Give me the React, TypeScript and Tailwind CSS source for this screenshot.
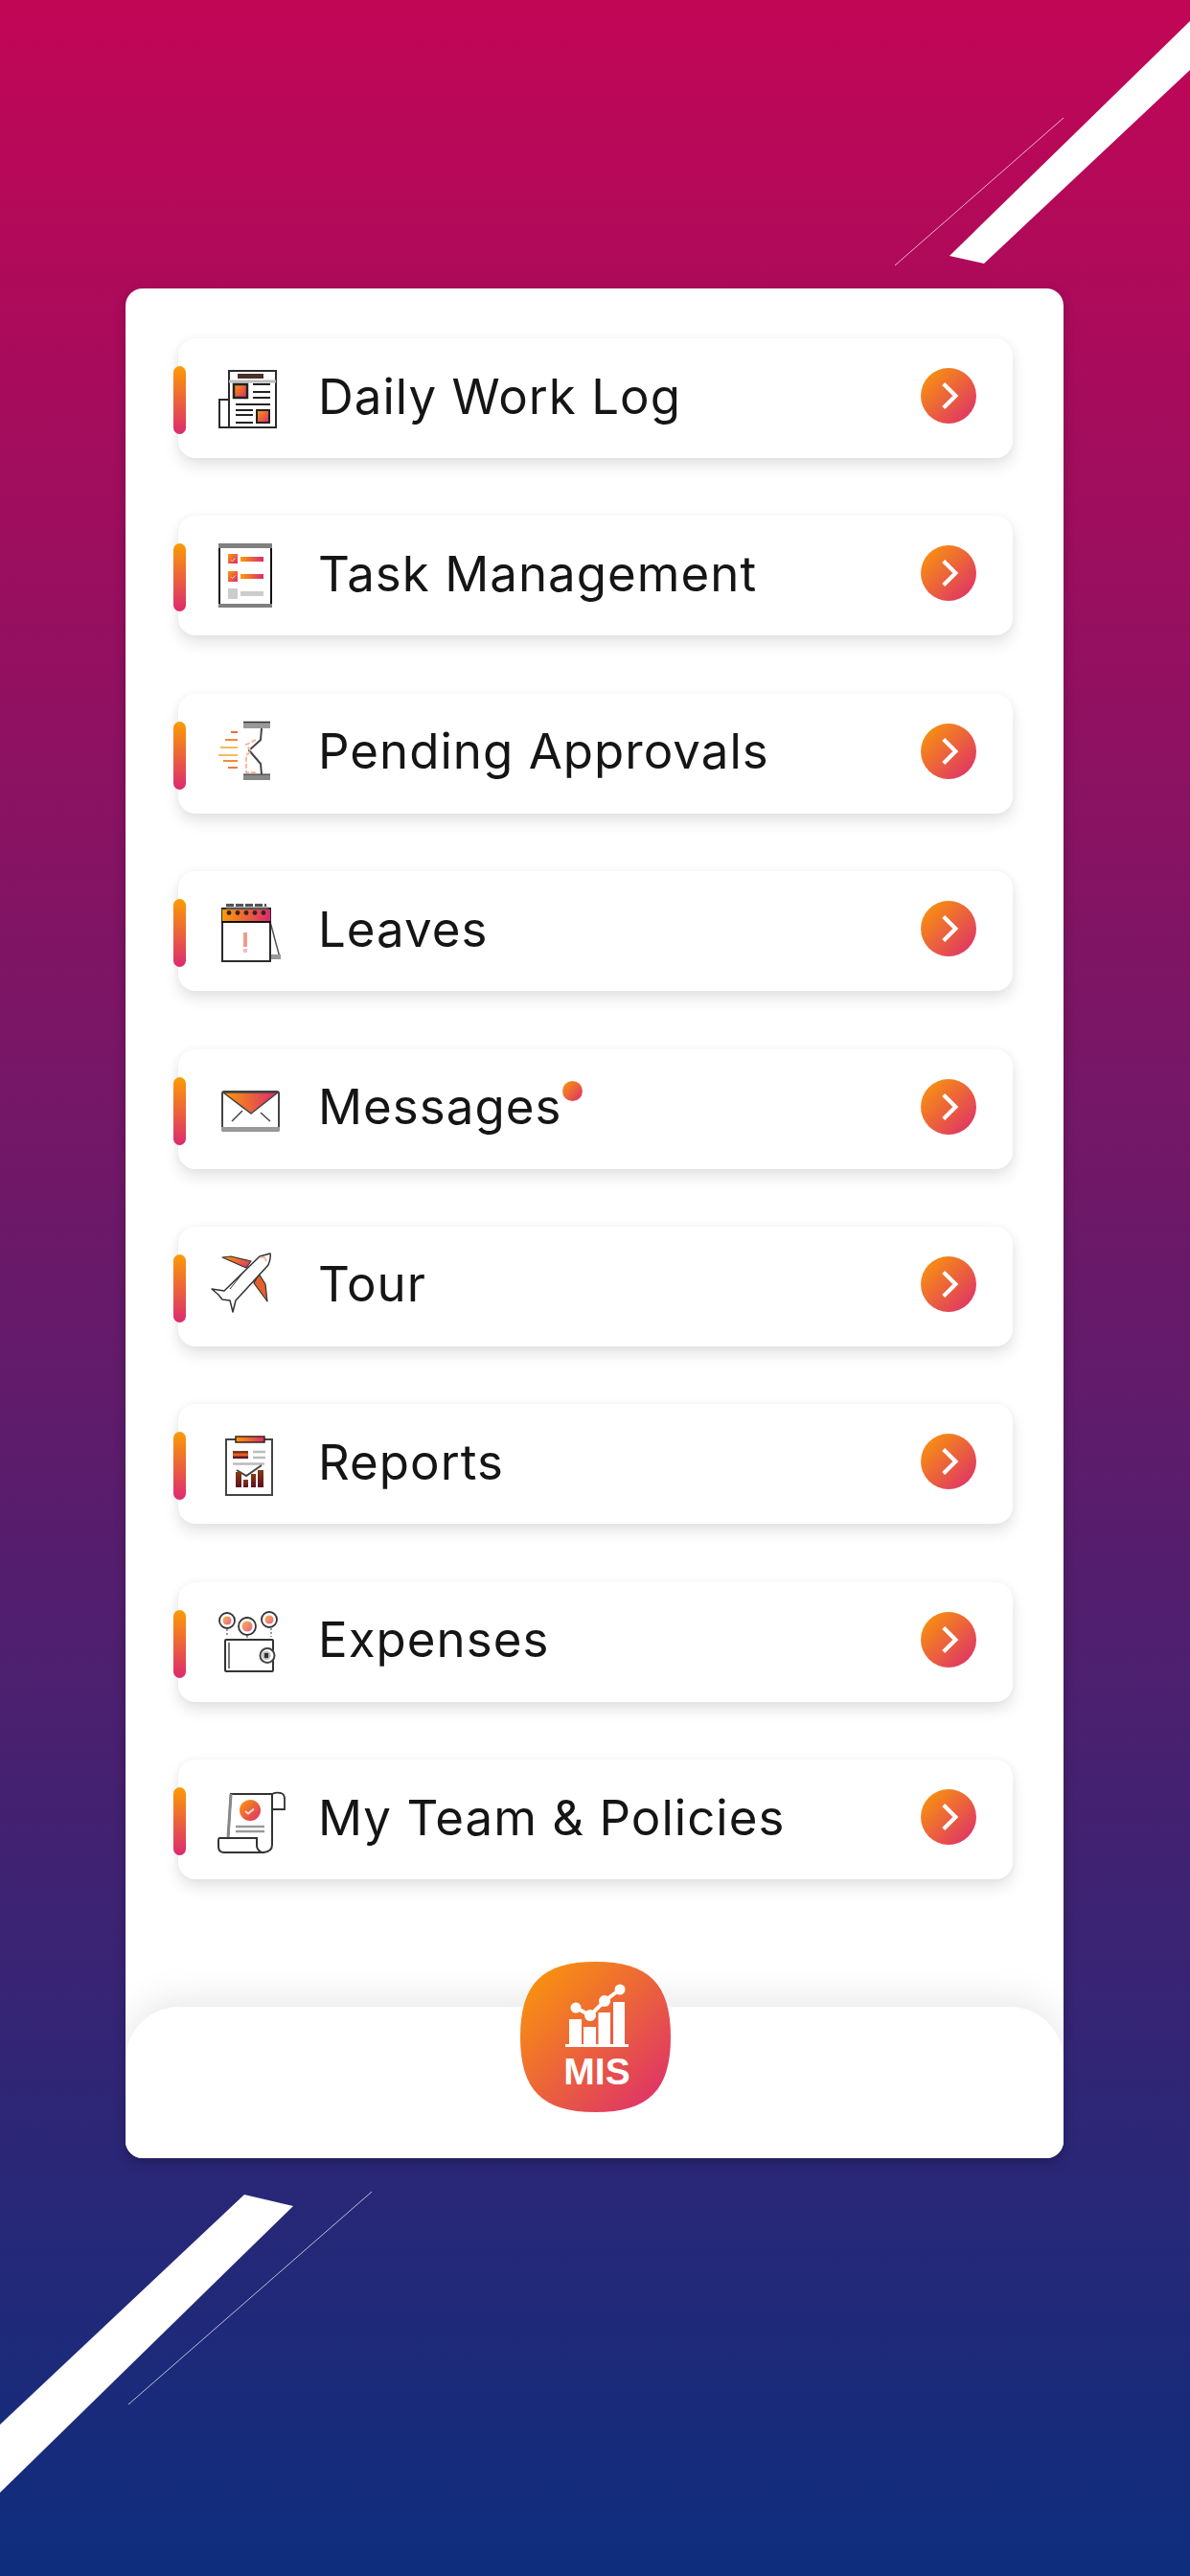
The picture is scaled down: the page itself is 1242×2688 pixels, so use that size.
import React from 'react';

const ink = '#2b2b2b';

// shared gradient used by every icon
const GradientDefs = () => (
  <svg className="absolute w-0 h-0">
    <defs>
      <linearGradient id="warm" x1="0" y1="0" x2="1" y2="1">
        <stop offset="0" stopColor="#fb9c05" />
        <stop offset="1" stopColor="#dc2a70" />
      </linearGradient>
      <linearGradient id="warmX" x1="0" y1="0" x2="1" y2="0">
        <stop offset="0" stopColor="#fb9c05" />
        <stop offset="1" stopColor="#dc2a70" />
      </linearGradient>
      <linearGradient id="warmDark" x1="0" y1="0" x2="0" y2="1">
        <stop offset="0" stopColor="#8a3a10" />
        <stop offset="1" stopColor="#5a1024" />
      </linearGradient>
    </defs>
  </svg>
);

const IconBox = ({ children }: { children: React.ReactNode }) => (
  <svg viewBox="0 0 80 80" className="w-[80px] h-[80px] shrink-0 overflow-visible" fill="none">
    {children}
  </svg>
);

const NewsIcon = () => (
  <IconBox>
    <rect x="23" y="11" width="49" height="59" stroke={ink} strokeWidth="2" fill="#fff" />
    <path d="M23 41H13V70H23" stroke={ink} strokeWidth="2" />
    <path d="M23 22H72" stroke="#bbb" strokeWidth="3" />
    <rect x="32" y="14" width="27" height="5" fill="#4a3028" />
    <rect x="28" y="25" width="14" height="14" fill="url(#warm)" stroke="#222" strokeWidth="2.5" />
    <path d="M48 25H66M48 33H66M48 39H66M30 46H66M30 52H48M30 57H48M30 65H48" stroke="#222" strokeWidth="2" />
    <rect x="52" y="52" width="13" height="13" fill="url(#warm)" stroke="#222" strokeWidth="2" />
  </IconBox>
);

const TaskIcon = () => (
  <IconBox>
    <rect x="13" y="7" width="54" height="65" stroke="#111" strokeWidth="2" fill="#fff" />
    <rect x="12" y="6" width="56" height="5" fill="#808080" />
    <rect x="12" y="69" width="56" height="4" fill="#808080" />
    <rect x="22" y="17" width="10" height="10" fill="url(#warm)" />
    <rect x="22" y="35" width="10" height="11" fill="url(#warm)" />
    <rect x="22" y="53" width="10" height="11" fill="#ccc" />
    <path d="M25 23l1.500 1.500 3-3M25 41l1.500 1.500 3-3" stroke="#fff" strokeWidth="1" opacity="0.7" />
    <rect x="35" y="20" width="24" height="5" fill="url(#warmX)" />
    <rect x="35" y="38" width="24" height="5" fill="url(#warmX)" />
    <rect x="35" y="56" width="24" height="5" fill="#ccc" />
  </IconBox>
);

const HourglassIcon = () => (
  <IconBox>
    <rect x="38" y="7" width="28" height="7" fill="#999" />
    <path d="M38 7.500H66" stroke="#333" strokeWidth="1.500" />
    <rect x="38" y="62" width="28" height="6" fill="#888" />
    <path d="M38 62H66" stroke="#333" strokeWidth="1" />
    <path d="M57 14L56 26L44 37L56 51L57 62" stroke="#444" strokeWidth="2" />
    <path d="M51 26L41 31L46 38L41 42V60H53" stroke="#f7b9a0" strokeWidth="2" strokeDasharray="5 2" />
    <path d="M25 18H32" stroke="#ee6a3a" strokeWidth="2" />
    <path d="M19 26H32" stroke="#f28b3a" strokeWidth="2" />
    <path d="M14 34H32" stroke="#f8a02a" strokeWidth="1.500" />
    <path d="M12 42H32" stroke="#f8a02a" strokeWidth="1.500" />
    <path d="M17 48H32" stroke="#f28b3a" strokeWidth="2" />
    <path d="M22 55H32" stroke="#ee7a3a" strokeWidth="2" />
  </IconBox>
);

const CalendarIcon = () => (
  <IconBox>
    <path d="M66 30L76 67" stroke="#555" strokeWidth="1.500" />
    <path d="M66 64H77V69H66Z" fill="#999" />
    <rect x="16" y="16" width="50" height="55" stroke="#2b2b2b" strokeWidth="2" fill="#fff" />
    <rect x="16" y="17" width="50" height="12" fill="url(#warmX)" />
    <path d="M15 30H67" stroke="#111" strokeWidth="2" />
    <path d="M20 12.500H62" stroke="#555" strokeWidth="3" strokeDasharray="8 2" />
    <path d="M20 15.500H64" stroke="#666" strokeWidth="2" />
    {[23, 32, 41, 50, 59].map((cx) => (
      <circle key={cx} cx={cx} cy="20.500" r="2.400" fill="#3a2418" />
    ))}
    <rect x="38" y="41" width="4" height="15" fill="#f59a8a" />
    <rect x="38" y="58" width="4" height="4" fill="#f7b9c0" />
  </IconBox>
);

const MailIcon = () => (
  <IconBox>
    <rect x="16" y="22" width="59" height="41" rx="2" stroke="#444" strokeWidth="2" fill="#fff" />
    <path d="M15 59H76V62Q76 64 74 64H17Q15 64 15 62Z" fill="#999" />
    <path d="M17 23H74L46 45Z" fill="url(#warmX)" stroke="#444" strokeWidth="1.500" strokeLinejoin="round" />
    <path d="M26 53L37 42M66 53L56 44" stroke="#444" strokeWidth="1.500" />
  </IconBox>
);

const PlaneIcon = () => (
  <IconBox>
    <path d="M16 10L25 9L46 14L41 21Z" fill="url(#warm)" stroke="#333" strokeWidth="1.200" strokeLinejoin="round" />
    <path d="M54 27L61 38L63 56L49 37Z" fill="#e4602c" stroke="#333" strokeWidth="1.200" strokeLinejoin="round" />
    <path
      d="M66 6L55 9L18 45L5 43L12 49L16 54L24 55L27 67L30 55L64 18Q67 11 66 6Z"
      fill="#fff"
      stroke="#333"
      strokeWidth="1.500"
      strokeLinejoin="round"
    />
    <path d="M56 10L60 10L62 14" stroke="#f7b9a0" strokeWidth="2" />
    <path d="M36 28L24 43" stroke="#333" strokeWidth="1" />
  </IconBox>
);

const ReportIcon = () => (
  <IconBox>
    <rect x="20" y="14" width="48" height="58" stroke="#444" strokeWidth="2" fill="#fff" />
    <rect x="30" y="11" width="30" height="6" fill="url(#warmX)" stroke="#3a2418" strokeWidth="1.500" />
    <rect x="27" y="26" width="16" height="8" fill="url(#warmDark)" />
    <rect x="27" y="28.500" width="16" height="3" fill="#e4602c" />
    <path d="M48 27H61M48 33H61M27 39.500H60" stroke="#bbb" strokeWidth="2.500" />
    <path d="M31 46L41 52L57 41" stroke="#444" strokeWidth="2" />
    <rect x="30" y="48" width="6" height="16" fill="url(#warmDark)" />
    <rect x="38" y="56" width="5" height="8" fill="url(#warmDark)" />
    <rect x="46" y="50" width="5" height="14" fill="url(#warmDark)" />
    <rect x="53" y="46" width="6" height="18" fill="url(#warmDark)" />
  </IconBox>
);

const WalletIcon = () => (
  <IconBox>
    {[
      [21, 18, 8],
      [42, 24, 9],
      [65, 17, 8],
    ].map(([cx, cy, r]) => (
      <g key={cx}>
        <circle cx={cx} cy={cy} r={r} stroke="#333" strokeWidth="1.800" fill="#fff" />
        <circle cx={cx} cy={cy} r={r - 3.500} fill="url(#warm)" opacity="0.75" />
      </g>
    ))}
    <path d="M21 27V35M42 34V37M67 26V35" stroke="#777" strokeWidth="1.500" strokeDasharray="2 2" />
    <rect x="19" y="38" width="50" height="33" rx="1" stroke="#333" strokeWidth="2" fill="#fff" />
    <path d="M23 41V68" stroke="#777" strokeWidth="2" />
    <circle cx="63" cy="54.500" r="7.500" stroke="#444" strokeWidth="2" fill="#fff" />
    <circle cx="62" cy="54.500" r="4.500" fill="#bbb" />
    <rect x="60" y="52" width="4" height="5" fill="#333" />
  </IconBox>
);

const PolicyIcon = () => (
  <IconBox>
    <path d="M68 13Q72 11 77 12Q81 13 81 18V29H68" stroke="#333" strokeWidth="1.800" fill="#fff" />
    <path d="M25 13H68V66Q68 73 59 74H30L22 59Z" stroke="#333" strokeWidth="2" fill="#fff" />
    <path d="M25 13L22 59" stroke="#888" strokeWidth="3" />
    <path d="M13 59H52V67Q52 71 57 74H18Q12 74 12 68V62Q12 59 13 59Z" stroke="#333" strokeWidth="2" fill="#fff" />
    <circle cx="45" cy="30" r="11" fill="url(#warm)" />
    <path d="M40 31l3 2.500 6-5" stroke="#fff" strokeWidth="1.800" opacity="0.8" />
    <path d="M30 47H60M30 52H60" stroke="#999" strokeWidth="2.500" />
  </IconBox>
);

const MisLogo = () => (
  <svg viewBox="0 0 157 157" className="w-[157px] h-[157px]">
    <path d="M78.500 0C134 0 157 23 157 78.500C157 134 134 157 78.500 157C23 157 0 134 0 78.500C0 23 23 0 78.500 0Z" fill="url(#warm)" />
    <rect x="47" y="86" width="66" height="3" fill="#fff" />
    <rect x="51" y="60" width="13" height="26" fill="#fff" />
    <rect x="66" y="68" width="13" height="18" fill="#fff" />
    <rect x="81.500" y="53" width="12.500" height="33" fill="#fff" />
    <rect x="97" y="42" width="12" height="44" fill="#fff" />
    <path d="M58 48L73 56L88 41L104 29" stroke="#fff" strokeWidth="4" fill="none" />
    <circle cx="58" cy="48" r="5.500" fill="#fff" />
    <circle cx="73" cy="56" r="6" fill="#fff" />
    <circle cx="88" cy="41" r="6" fill="#fff" />
    <circle cx="104" cy="29" r="5.500" fill="#fff" />
    <text x="80" y="128" textAnchor="middle" fontFamily="'Liberation Sans', sans-serif" fontWeight="700" fontSize="39" fill="#fff">
      MIS
    </text>
  </svg>
);

const menu = [
  { label: 'Daily Work Log', Icon: NewsIcon },
  { label: 'Task Management', Icon: TaskIcon },
  { label: 'Pending Approvals', Icon: HourglassIcon },
  { label: 'Leaves', Icon: CalendarIcon },
  { label: 'Messages', Icon: MailIcon, dot: true },
  { label: 'Tour', Icon: PlaneIcon },
  { label: 'Reports', Icon: ReportIcon },
  { label: 'Expenses', Icon: WalletIcon },
  { label: 'My Team & Policies', Icon: PolicyIcon },
];

export default function App() {
  return (
    <div className="relative w-[1242px] h-[2688px] overflow-hidden bg-linear-to-b/srgb from-[#c20656] to-[#0e2d7d] pt-[301px] pl-[131px] font-['Inter',sans-serif]">
      <GradientDefs />

      {/* diagonal stripes */}
      <svg viewBox="0 0 1242 2688" className="absolute inset-0 w-[1242px] h-[2688px]">
        <polygon points="991,267 1027,275 1242,73 1242,22" fill="#fff" />
        <line x1="934" y1="277" x2="1110" y2="123" stroke="#fff" strokeOpacity="0.7" strokeWidth="1" />
        <polygon points="255,2290 306,2302 0,2601 0,2530" fill="#fff" />
        <line x1="134" y1="2509" x2="388" y2="2287" stroke="#fff" strokeOpacity="0.7" strokeWidth="1" />
      </svg>

      <div className="relative w-[979px] h-[1951px] rounded-[18px] bg-white shadow-[0_4px_12px_rgba(0,0,0,0.25)]">
        <div className="flex flex-col gap-[60.4px] pt-[52px] pl-[55px] pr-[53px]">
          {menu.map(({ label, Icon, dot }) => (
            <div
              key={label}
              className="relative flex items-center h-[125px] pl-[30px] pr-[38px] rounded-[18px] bg-white shadow-[0_8px_16px_rgba(0,0,0,0.11),0_0_8px_rgba(0,0,0,0.04)]"
            >
              <span className="absolute left-[-5px] top-[29px] w-[13px] h-[71px] rounded-full bg-linear-to-b/srgb from-[#fb9c05] to-[#dc2a70]" />
              <Icon />
              <span className="relative ml-[36px] mt-[-5px] text-[51px] leading-none tracking-[0.02em] text-[#151515]">
                {label}
                {dot && (
                  <span className="absolute right-[-22px] top-[-1px] w-[21px] h-[21px] rounded-full bg-linear-to-br/srgb from-[#fb9c05] to-[#dc2a70]" />
                )}
              </span>
              <span className="ml-auto mt-[-5px] flex items-center justify-center w-[58px] h-[58px] rounded-full bg-linear-to-br/srgb from-[#fb9c05] to-[#dc2a70]">
                <svg viewBox="0 0 24 24" className="w-[42px] h-[42px]" fill="none" stroke="#fff" strokeWidth="2.400">
                  <path d="M9 4.800L16.200 12L9 19.200" />
                </svg>
              </span>
            </div>
          ))}
        </div>

        <div className="absolute left-0 right-0 bottom-0 h-[158px] rounded-t-[56px] rounded-b-[18px] bg-white shadow-[0_-6px_40px_rgba(0,0,0,0.1)] [clip-path:inset(-60px_0_0_0)]">
          <div className="absolute left-[412px] top-[-47px]">
            <MisLogo />
          </div>
        </div>
      </div>
    </div>
  );
}
